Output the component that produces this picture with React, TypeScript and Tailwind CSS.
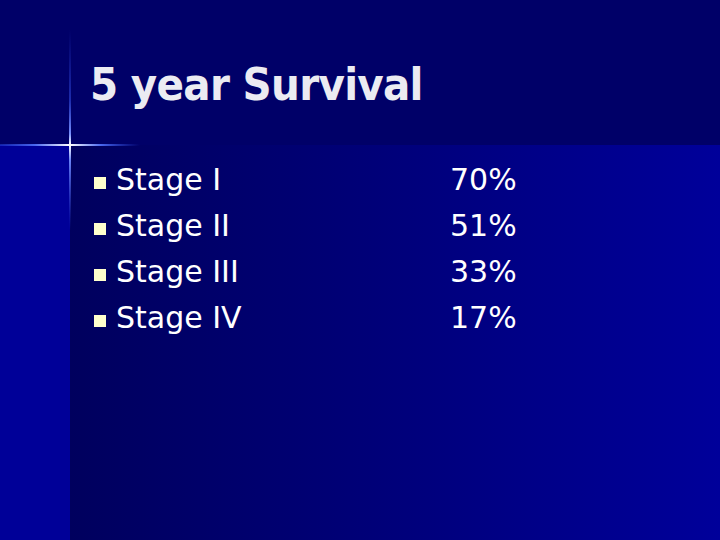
const rows = [
  { stage: "Stage I", pct: "70%" },
  { stage: "Stage II", pct: "51%" },
  { stage: "Stage III", pct: "33%" },
  { stage: "Stage IV", pct: "17%" },
];

function Crosshair() {
  return (
    <svg className="pointer-events-none absolute inset-0" width={720} height={540} viewBox="0 0 720 540">
      <defs>
        <linearGradient id="vline" x1="0" y1="0" x2="0" y2="1">
          <stop offset="0" stopColor="#2a3cd0" stopOpacity="0" />
          <stop offset="0.35" stopColor="#3048d8" stopOpacity="0.6" />
          <stop offset="0.52" stopColor="#7890ff" />
          <stop offset="0.575" stopColor="#ffffff" />
          <stop offset="0.65" stopColor="#6a84f8" />
          <stop offset="1" stopColor="#2a3cd0" stopOpacity="0" />
        </linearGradient>
        <linearGradient id="hline" x1="0" y1="0" x2="1" y2="0">
          <stop offset="0" stopColor="#2a48e0" stopOpacity="0.5" />
          <stop offset="0.25" stopColor="#4a68f0" />
          <stop offset="0.5" stopColor="#ffffff" />
          <stop offset="0.72" stopColor="#4a68f0" />
          <stop offset="1" stopColor="#2a48e0" stopOpacity="0" />
        </linearGradient>
      </defs>
      <rect x={69} y={30} width={2} height={200} fill="url(#vline)" />
      <rect x={0} y={144} width={140} height={2} fill="url(#hline)" />
    </svg>
  );
}

export default function App() {
  return (
    <div
      className="relative flex h-[540px] w-[720px] flex-col overflow-hidden bg-[#000099]"
      style={{ fontFamily: '"DejaVu Sans", Verdana, sans-serif' }}
    >
      {/* title band */}
      <div className="h-[145px] shrink-0 bg-[#000068] pl-[90px] pt-[62px]">
        <h1
          className="text-[45px] font-bold leading-[45px] tracking-[-0.7px] text-[#ebebf2]"
          style={{ fontFamily: '"DejaVu Sans Condensed", "DejaVu Sans", sans-serif', fontStretch: "condensed" }}
        >
          5 year Survival
        </h1>
      </div>

      {/* body */}
      <div className="flex flex-1">
        <div className="w-[70px] shrink-0 bg-[#000098]" />
        <div className="flex-1 bg-gradient-to-r from-[#00005e] via-[#00007a] to-[#00009a] pl-[24px] pt-[12px]">
          <ul className="flex flex-col">
            {rows.map((r) => (
              <li key={r.stage} className="flex h-[46px] items-center text-[30px] leading-[46px] text-white">
                <span className="mt-[5px] h-[12px] w-[12px] shrink-0 bg-[#ffffcc]" />
                <span className="ml-[10px] w-[334px]">{r.stage}</span>
                <span>{r.pct}</span>
              </li>
            ))}
          </ul>
        </div>
      </div>

      <Crosshair />
    </div>
  );
}
